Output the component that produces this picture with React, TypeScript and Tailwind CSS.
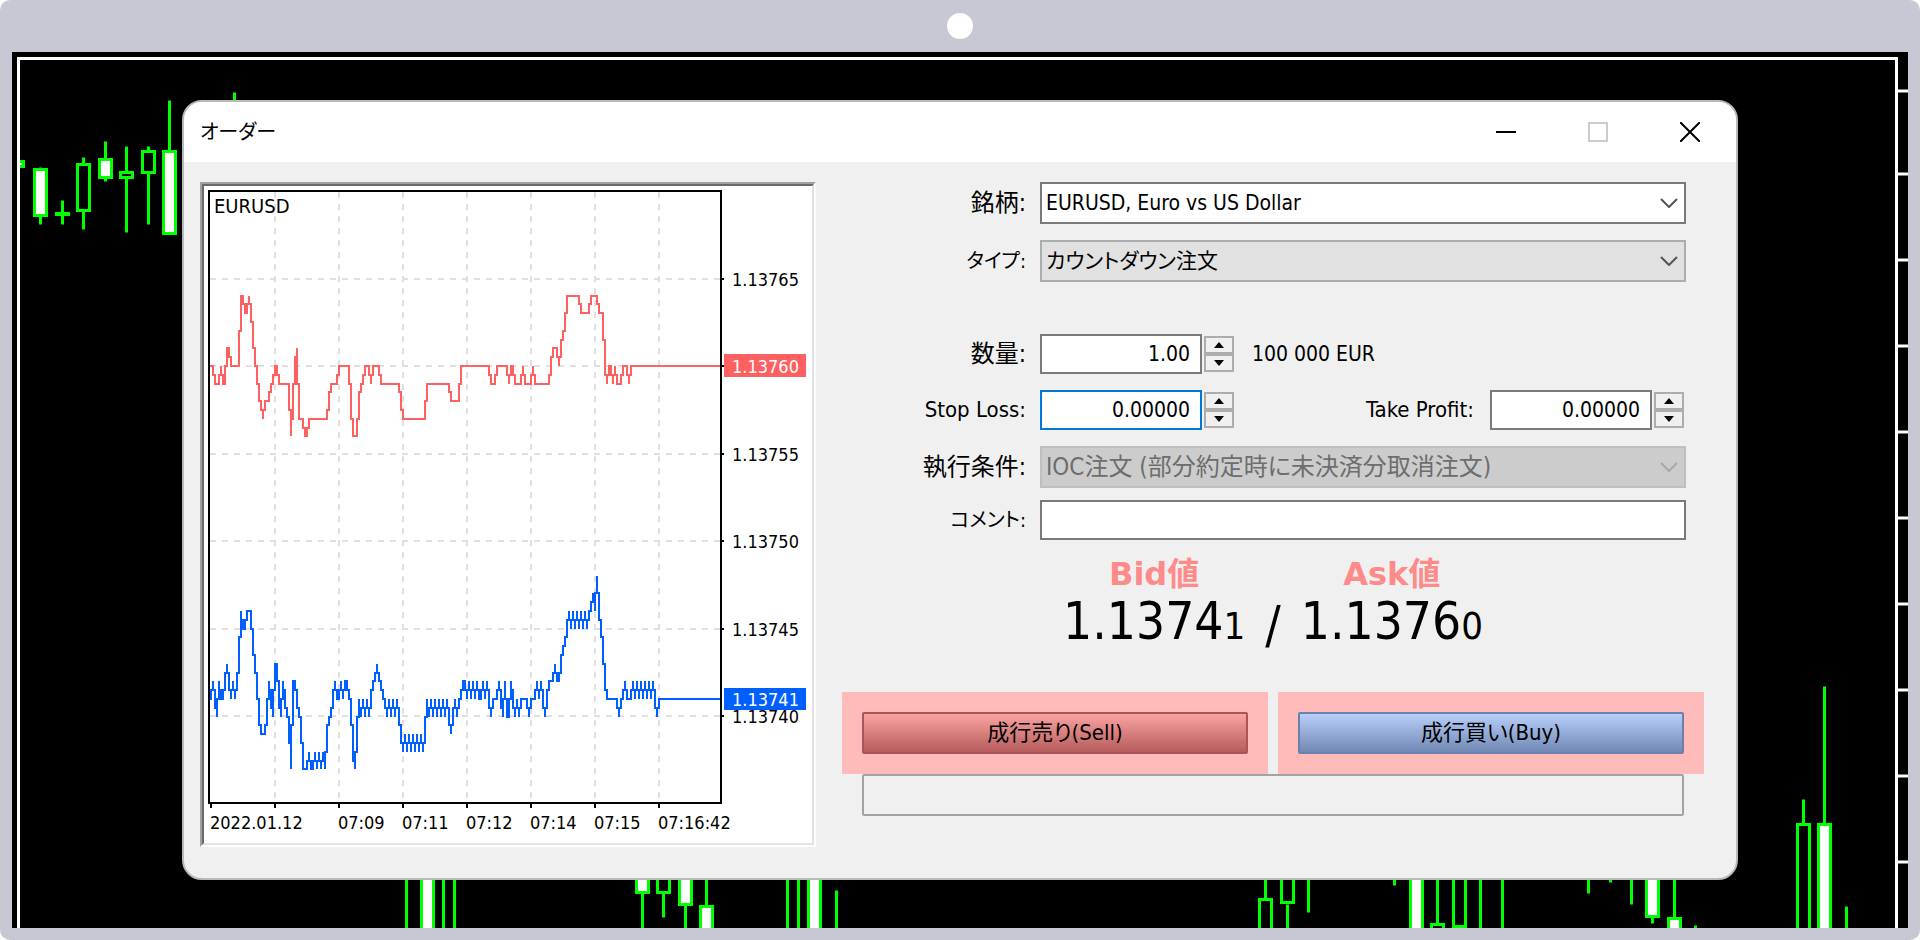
import { ReactNode, useState } from 'react';

type Step = [number, number];

const fontStack = "font-['DejaVu_Sans_Condensed','DejaVu_Sans','Noto_Sans_CJK_JP',sans-serif]";

// [first tick, distance in points from the last price]
const askSteps: Step[] = [
  [2, 0], [5, -1], [8, 0], [9, -1], [11, 1], [13, 0], [18, 4], [20, 3], [22, 4], [23, 3],
  [24, 2], [25, 0], [27, -2], [29, -3], [30, -2], [33, -1], [35, 0], [37, -1], [43, -4], [44, -2],
  [45, 0], [46, 1], [47, -3], [50, -4], [52, -3], [62, -2], [63, -1], [67, 0], [73, -2], [74, -4],
  [77, -2], [78, -1], [80, 0], [83, -1], [84, 0], [88, -1], [98, -2], [99, -3], [111, -1], [123, -2],
  [128, 0], [143, -1], [146, 0], [152, -1], [153, 0], [155, -1], [159, 0], [160, -1], [164, 0], [165, -1],
  [173, 0], [174, 1], [177, 0], [178, 1], [179, 2], [181, 4], [188, 3], [193, 4], [197, 3], [200, 0],
  [201, -1], [202, 0], [204, -1], [205, 0], [206, -1], [209, 0], [212, -1], [213, 0],
];

const bidSteps: Step[] = [
  [2, 0], [4, 1], [5, 0], [6, -1], [7, 1], [8, 0], [10, 1], [11, 2], [12, 1], [13, 0],
  [14, 1], [15, 0], [16, 1], [17, 2], [18, 5], [19, 4], [21, 5], [24, 3], [25, 2], [26, 1],
  [27, -1], [28, -2], [31, -1], [32, 1], [33, 0], [34, -1], [35, 2], [37, 0], [38, -1], [39, 1],
  [40, 0], [41, -1], [43, -4], [44, 1], [46, 0], [47, -1], [49, -4], [52, -3], [53, -4], [55, -3],
  [56, -4], [57, -3], [58, -4], [59, -3], [60, -4], [61, -2], [62, -1], [64, 0], [65, 1], [66, 0],
  [68, 1], [69, 0], [70, 1], [72, 0], [74, -3], [75, -4], [76, -2], [77, 0], [78, -1], [79, 0],
  [80, -1], [81, 0], [82, -1], [83, 0], [84, 1], [85, 1], [86, 2], [87, 1], [89, 0], [91, -1],
  [92, 0], [93, -1], [94, 0], [95, -1], [96, 0], [97, -1], [98, -2], [99, -3], [100, -2], [101, -3],
  [102, -2], [103, -3], [104, -2], [105, -3], [106, -2], [107, -3], [108, -2], [109, -3], [110, -2], [111, 0],
  [112, -1], [113, 0], [114, -1], [115, 0], [116, -1], [117, 0], [118, -1], [119, 0], [120, -1], [121, 0],
  [122, -1], [123, -2], [124, -1], [125, 0], [126, -1], [127, 0], [129, 1], [131, 0], [132, 1], [133, 0],
  [134, 1], [135, 0], [136, 1], [137, 0], [139, 1], [140, 0], [141, 1], [142, 0], [143, -1], [144, 0],
  [147, 1], [148, 0], [149, -1], [150, 1], [151, -1], [153, 1], [154, 0], [155, -1], [156, 0], [157, -1],
  [158, 0], [162, -1], [163, 0], [166, 1], [167, 0], [168, 1], [169, 0], [170, -1], [171, 0], [172, 1],
  [175, 2], [176, 1], [178, 2], [179, 3], [181, 4], [182, 5], [183, 4], [184, 5], [185, 4], [186, 5],
  [187, 4], [188, 5], [189, 4], [190, 5], [191, 4], [192, 5], [194, 6], [195, 5], [196, 7], [197, 5],
  [198, 4], [199, 3], [200, 1], [201, 0], [207, -1], [208, 0], [210, 1], [211, 0], [214, 1], [215, 0],
  [216, 1], [217, 0], [218, 1], [219, 0], [220, 1], [221, 0], [222, 1], [223, 0], [224, 1], [225, 0],
  [226, -1], [227, 0],
];

const LAST_TICK = 257;
const POINT = 17.6;

const tickPath = (steps: Step[], base: number) => {
  const levels: number[] = [];
  steps.forEach(([from, level], i) => {
    const to = i + 1 < steps.length ? steps[i + 1][0] : LAST_TICK + 1;
    for (let tick = from; tick < to; tick++) levels.push(level);
  });
  const y = (level: number) => Math.round(base - level * POINT);
  let d = `M5 ${y(levels[0])}`;
  levels.forEach((level, i) => {
    const next = levels[i + 1] ?? level;
    d += `V${y(level)}V${y((level + next) / 2)}H${5 + (i + 1) * 2}`;
  });
  return d;
};

const gridX = [71, 135, 199, 263, 327, 391, 455];

const prices = [
  { label: '1.13765', y: 93 },
  { label: '', y: 180 },
  { label: '1.13755', y: 268 },
  { label: '1.13750', y: 355 },
  { label: '1.13745', y: 443 },
  { label: '1.13740', y: 530 },
];

const times = [
  { label: '2022.01.12', x: 6 },
  { label: '07:09', x: 134 },
  { label: '07:11', x: 198 },
  { label: '07:12', x: 262 },
  { label: '07:14', x: 326 },
  { label: '07:15', x: 390 },
  { label: '07:16:42', x: 454 },
];

const TickChart = () => (
  <div className="self-start border-2 border-t-[#a0a0a0] border-r-white border-b-white border-l-[#a0a0a0]">
    <div className="border-2 border-t-[#696969] border-r-[#e3e3e3] border-b-[#e3e3e3] border-l-[#696969] bg-white">
      <svg viewBox="0 0 608 657" className="block w-full" fontSize="18" role="img" aria-label="EURUSD tick chart">
        <g stroke="#e0e0e0" strokeWidth="2" strokeDasharray="6 6" shapeRendering="crispEdges">
          {gridX.map((x) => (
            <line key={x} x1={x} x2={x} y1="6" y2="617" />
          ))}
          {prices.map(({ y }) => (
            <line key={y} x1="6" x2="516" y1={y} y2={y} />
          ))}
        </g>
        <g fill="none" strokeWidth="2" shapeRendering="crispEdges">
          <path d={tickPath(askSteps, 180)} stroke="#ff6060" />
          <path d={tickPath(bidSteps, 513)} stroke="#0060ff" />
          <rect x="5" y="5" width="512" height="612" stroke="#000" />
          {prices.map(({ y }) => (
            <line key={y} x1="518" x2="520" y1={y} y2={y} stroke="#000" />
          ))}
          {[7, ...gridX].map((x) => (
            <line key={x} x1={x} x2={x} y1="618" y2="622" stroke="#000" />
          ))}
        </g>
        <text x="10" y="27" fontSize="20">
          EURUSD
        </text>
        {prices.map(({ label, y }) => (
          <text key={y} x="528" y={y + 7}>
            {label}
          </text>
        ))}
        <rect x="520" y="168" width="82" height="23" fill="#ff6060" />
        <text x="528" y="187" fill="#fff">
          1.13760
        </text>
        <rect x="520" y="502" width="82" height="22" fill="#0060ff" />
        <text x="528" y="520" fill="#fff">
          1.13741
        </text>
        {times.map(({ label, x }) => (
          <text key={x} x={x} y="643">
            {label}
          </text>
        ))}
      </svg>
    </div>
  </div>
);

type Candle = {
  x: number;
  wick?: [number, number];
  body?: [number, number];
  down?: boolean;
};

const candles: Candle[] = [
  { x: 5, body: [109, 114], down: true },
  { x: 28, wick: [115, 172], body: [117, 163], down: true },
  { x: 50, wick: [148, 172], body: [161, 162] },
  { x: 71, wick: [105, 177], body: [112, 158] },
  { x: 93, wick: [89, 129], body: [107, 125], down: true },
  { x: 114, wick: [94, 180], body: [120, 125] },
  { x: 136, wick: [94, 172], body: [99, 120] },
  { x: 157, wick: [48, 149], body: [99, 181], down: true },
  { x: 222, wick: [40, 60] },
  { x: 394, wick: [820, 880] },
  { x: 415, body: [700, 890], down: true },
  { x: 431, wick: [820, 880] },
  { x: 442, wick: [820, 880] },
  { x: 630, wick: [820, 880], body: [800, 840], down: true },
  { x: 651, wick: [841, 865], body: [800, 840] },
  { x: 673, wick: [820, 880], body: [800, 852], down: true },
  { x: 694, wick: [820, 853], body: [854, 890], down: true },
  { x: 775, wick: [820, 880] },
  { x: 786, wick: [820, 880] },
  { x: 802, body: [800, 890], down: true },
  { x: 824, wick: [838, 880] },
  { x: 1253, wick: [820, 846], body: [847, 890] },
  { x: 1275, wick: [852, 880], body: [800, 850] },
  { x: 1296, wick: [820, 860] },
  { x: 1382, wick: [820, 833] },
  { x: 1404, body: [800, 890], down: true },
  { x: 1425, wick: [820, 871], body: [872, 890] },
  { x: 1447, body: [800, 874] },
  { x: 1468, wick: [820, 880] },
  { x: 1490, wick: [820, 880] },
  { x: 1576, wick: [820, 841] },
  { x: 1598, wick: [820, 830] },
  { x: 1619, wick: [820, 852] },
  { x: 1640, wick: [820, 871], body: [800, 864], down: true },
  { x: 1662, wick: [820, 865], body: [866, 890], down: true },
  { x: 1683, wick: [873, 880] },
  { x: 1791, wick: [747, 771], body: [772, 890] },
  { x: 1812, wick: [634, 771], body: [772, 890], down: true },
  { x: 1834, wick: [854, 880] },
];

const scaleMarks = [39, 122, 208, 294, 380, 466, 552, 638, 724, 810];

const MarketChart = () => (
  <svg viewBox="0 0 1896 876" preserveAspectRatio="none" className="absolute inset-0 size-full" aria-hidden="true">
    <g stroke="#0f0" strokeWidth="3" transform="translate(0.5 0.5)">
      {candles.map(({ x, wick, body, down }) => (
        <g key={x}>
          {wick && <line x1={x} x2={x} y1={wick[0]} y2={wick[1]} />}
          {body && (
            <rect x={x - 6} y={body[0]} width="12" height={body[1] - body[0]} fill={down ? '#fff' : '#000'} />
          )}
        </g>
      ))}
    </g>
    <rect x="0" y="100" width="5" height="30" fill="#000" />
    <path d="M6.5 880V6.5H1884.5V880" fill="none" stroke="#fff" strokeWidth="3" />
    {scaleMarks.map((y) => (
      <line key={y} x1="1886" x2="1896" y1={y} y2={y} stroke="#fff" strokeWidth="3" />
    ))}
  </svg>
);

const TitleBar = () => (
  <header className="flex h-[60px] items-stretch justify-between bg-white pl-4">
    <h1 className="self-center text-[20px] leading-7 [font-feature-settings:'palt']">オーダー</h1>
    <div className="flex">
      <button type="button" aria-label="最小化" className="flex w-[92px] items-center justify-center">
        <span className="h-0.5 w-5 bg-black" />
      </button>
      <button type="button" aria-label="最大化" disabled className="flex w-[92px] items-center justify-center">
        <span className="size-5 border-2 border-[#ccc]" />
      </button>
      <button type="button" aria-label="閉じる" className="flex w-[92px] items-center justify-center">
        <svg viewBox="0 0 20 20" className="size-5" stroke="#000" strokeWidth="2">
          <path d="M0 0L20 20M20 0L0 20" />
        </svg>
      </button>
    </div>
  </header>
);

const FieldLabel = ({ htmlFor, size = 'text-[22px]', children }: { htmlFor: string; size?: string; children: ReactNode }) => (
  <label
    htmlFor={htmlFor}
    className={`self-center text-right leading-8 whitespace-nowrap [font-feature-settings:'palt'] ${size}`}
  >
    {children}
  </label>
);

const Combo = ({ id, value, look, disabled }: { id: string; value: string; look: string; disabled?: boolean }) => (
  <div className="relative">
    <select
      id={id}
      disabled={disabled}
      className={`h-[42px] w-full appearance-none border-2 pr-10 pl-1 leading-8 opacity-100 [font-feature-settings:'palt'] ${look}`}
    >
      <option>{value}</option>
    </select>
    <svg
      viewBox="0 0 18 10"
      className={`pointer-events-none absolute top-4 right-2 h-2.5 w-[18px] ${disabled ? 'text-[#a8a8a8]' : 'text-[#555]'}`}
      fill="none"
      stroke="currentColor"
      strokeWidth="2"
    >
      <path d="M1 1L9 9L17 1" />
    </svg>
  </div>
);

const spinButton = 'flex h-[18px] w-full items-center justify-center border-2 border-[#adadad] bg-[#f0f0f0]';

const SpinField = ({ id, initial, step, digits, look }: { id: string; initial: number; step: number; digits: number; look: string }) => {
  const [value, setValue] = useState(initial.toFixed(digits));

  const change = (delta: number) => {
    setValue((prev) => Math.max(0, Number(prev) + delta).toFixed(digits));
  };

  return (
    <div className="flex items-center gap-0.5">
      <input
        id={id}
        type="text"
        inputMode="decimal"
        className={`h-10 w-[162px] border-2 bg-white pr-2.5 text-right text-[21px] leading-8 outline-none ${look}`}
        value={value}
        onChange={(e) => setValue(e.target.value)}
      />
      <div className="w-[30px]">
        <button type="button" aria-label="増やす" className={spinButton} onClick={() => change(step)}>
          <svg viewBox="0 0 10 6" className="h-1.5 w-2.5">
            <path d="M5 0L10 6H0Z" />
          </svg>
        </button>
        <button type="button" aria-label="減らす" className={spinButton} onClick={() => change(-step)}>
          <svg viewBox="0 0 10 6" className="h-1.5 w-2.5">
            <path d="M5 6L10 0H0Z" />
          </svg>
        </button>
      </div>
    </div>
  );
};

const Quote = ({ title, price, pip }: { title: string; price: string; pip: string }) => (
  <div className="flex flex-col items-center">
    <span className="font-['DejaVu_Sans','Noto_Sans_CJK_JP',sans-serif] text-[32px] leading-9 font-bold text-[#ff8a8a]">
      {title}
    </span>
    <span className="text-[51px] leading-[60px]">
      {price}
      <span className="text-[38px]">{pip}</span>
    </span>
  </div>
);

const OrderForm = () => (
  <form className="pr-8 pl-[26px]" onSubmit={(e) => e.preventDefault()}>
    <div className="grid grid-cols-[184px_1fr] gap-x-3.5 pr-[18px]">
      <FieldLabel htmlFor="symbol" size="text-[24px]">
        銘柄:
      </FieldLabel>
      <Combo id="symbol" value="EURUSD, Euro vs US Dollar" look="border-[#7a7a7a] bg-white text-[21px]" />
      <div className="col-span-2 h-4" />
      <FieldLabel htmlFor="type" size="text-[20px]">
        タイプ:
      </FieldLabel>
      <Combo id="type" value="カウントダウン注文" look="border-[#adadad] bg-[#e1e1e1] text-[21px]" />
      <div className="col-span-2 h-[52px]" />
      <FieldLabel htmlFor="volume" size="text-[24px]">
        数量:
      </FieldLabel>
      <div className="flex items-center gap-[18px]">
        <SpinField id="volume" initial={1} step={0.01} digits={2} look="border-[#7a7a7a]" />
        <span className="text-[21px] leading-8">100 000 EUR</span>
      </div>
      <div className="col-span-2 h-4" />
      <FieldLabel htmlFor="stop-loss">Stop Loss:</FieldLabel>
      <div className="flex items-center justify-between pr-0.5">
        <SpinField id="stop-loss" initial={0} step={0.00001} digits={5} look="border-[#0078d7]" />
        <div className="flex items-center gap-4">
          <FieldLabel htmlFor="take-profit">Take Profit:</FieldLabel>
          <SpinField id="take-profit" initial={0} step={0.00001} digits={5} look="border-[#7a7a7a]" />
        </div>
      </div>
      <div className="col-span-2 h-4" />
      <FieldLabel htmlFor="filling" size="text-[24px]">
        執行条件:
      </FieldLabel>
      <Combo
        id="filling"
        value="IOC注文 (部分約定時に未決済分取消注文)"
        look="border-[#bfbfbf] bg-[#ccc] text-[24px] text-[#6d6d6d]"
        disabled
      />
      <div className="col-span-2 h-3" />
      <FieldLabel htmlFor="comment" size="text-[20px]">
        コメント:
      </FieldLabel>
      <input id="comment" type="text" className="h-10 w-full border-2 border-[#7a7a7a] bg-white px-1 outline-none" />
    </div>

    <div className="mt-4 flex items-end justify-center gap-5">
      <Quote title="Bid値" price="1.1374" pip="1" />
      <span className="text-[51px] leading-[60px]">/</span>
      <Quote title="Ask値" price="1.1376" pip="0" />
    </div>

    <div className="mt-9 grid grid-cols-2 gap-2.5">
      <div className="bg-[#ffbaba] p-5">
        <button
          type="submit"
          className="h-[42px] w-full rounded-xs border-2 border-[#ad5555] bg-linear-to-b from-[#fba3a3] to-[#b65c5c] leading-8 [font-feature-settings:'palt']"
        >
          成行売り(Sell)
        </button>
      </div>
      <div className="bg-[#ffbaba] p-5">
        <button
          type="submit"
          className="h-[42px] w-full rounded-xs border-2 border-[#6b80ad] bg-linear-to-b from-[#b8cffa] to-[#7289b6] leading-8 [font-feature-settings:'palt']"
        >
          成行買い(Buy)
        </button>
      </div>
    </div>
    <div className="mx-5 h-[42px] rounded-xs border-2 border-[#a3a3a3]" />
  </form>
);

const App = () => {
  return (
    <div className={`flex min-h-screen flex-col rounded-[10px] bg-[#c8c8d4] px-3 pb-3 text-[22px] text-black ${fontStack}`}>
      <div className="flex h-[52px] items-center justify-center">
        <span className="size-[26px] rounded-full bg-white" />
      </div>
      <main className="relative flex-1 overflow-hidden bg-black px-[170px] py-12">
        <MarketChart />
        <section className="relative overflow-hidden rounded-[20px] border-2 border-[#b9b9b9] bg-[#f0f0f0]">
          <TitleBar />
          <div className="grid grid-cols-[616px_1fr] pt-5 pb-[31px] pl-4">
            <TickChart />
            <OrderForm />
          </div>
        </section>
      </main>
    </div>
  );
};

export default App;
